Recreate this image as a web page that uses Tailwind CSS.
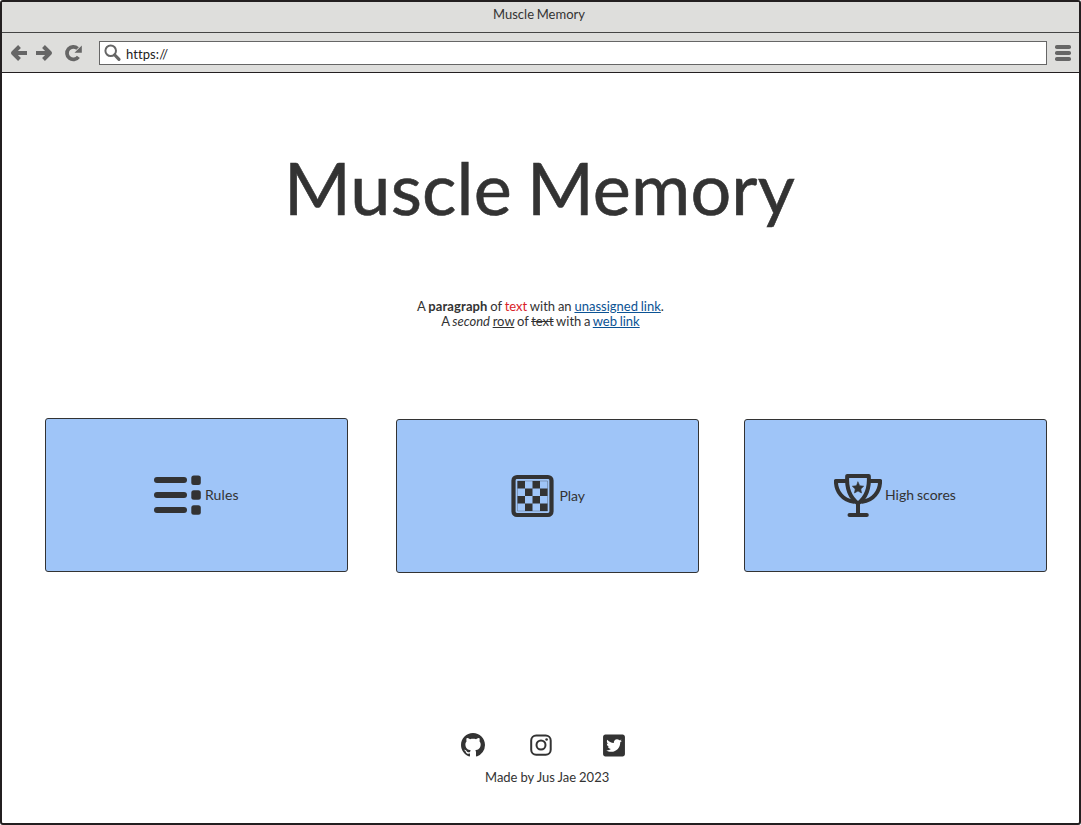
<!DOCTYPE html>
<html lang="en">
<head>
<meta charset="utf-8">
<title>Muscle Memory</title>
<script src="https://cdn.jsdelivr.net/npm/@tailwindcss/browser@4"></script>
</head>
<body class="bg-white">
<div class="flex h-[825px] w-[1081px] flex-col overflow-hidden rounded-[3px] border-2 border-[#231f20] bg-white font-[Lato,sans-serif] text-[13px] leading-[15px] text-[#333333]">
  <header class="h-[31px] shrink-0 border-b border-[#444444] bg-[#dededc] pt-[5px] text-center"><span class="mr-[3px] [word-spacing:-0.6px]">Muscle Memory</span></header>
  <nav class="flex h-10 shrink-0 items-center border-b border-[#231f20] bg-[#dededc] pl-2 text-[#666666]">
    <svg class="h-5 w-[76px]" viewBox="10 43 76 20" fill="none" stroke="currentColor" stroke-width="4" stroke-linejoin="round">
      <path d="M13 53H27M19.500 46.500L13 53L19.500 59.500"/>
      <path d="M36 53H50M43.500 46.500L50 53L43.500 59.500"/>
      <path d="M78.400 56.800A6.300 6.300 0 1 1 77.600 48.500" stroke-width="3.700"/>
      <path d="M81.800 45.500V52.800H74.500Z" fill="currentColor" stroke="none"/>
    </svg>
    <div class="ml-[13px] flex h-6 w-[948px] items-center border border-[#666666] bg-white pl-1">
      <svg class="h-5 w-[18px]" viewBox="104 43 18 20" fill="none" stroke="currentColor"><circle cx="110.700" cy="50.800" r="5.300" stroke-width="2"/><path d="M114.800 55L119 59.300" stroke-width="3.200" stroke-linecap="round"/></svg>
      <span class="ml-1 mt-[3px] tracking-[0.08px] text-[#222222]">https://</span>
    </div>
    <svg class="ml-2 h-4 w-4" viewBox="0 0 16 16" fill="currentColor"><rect width="16" height="4" rx="1.800"/><rect y="6" width="16" height="4" rx="1.800"/><rect y="12" width="16" height="4" rx="1.800"/></svg>
  </nav>
  <main class="flex grow flex-col">
    <h1 class="mt-[71px] h-[86px] pr-[2px] text-center text-[72px] leading-[86px] tracking-[0.16px] [word-spacing:-3.5px] [-webkit-text-stroke:0.6px_#333333]">Muscle Memory</h1>
    <p class="mt-[69px] text-center [word-spacing:-0.5px]">A <b class="tracking-[0.1px]">paragraph</b> of <span class="text-[#da2128]">text</span> with an <a class="text-[#0b5394] underline">unassigned link</a>.<br><span class="[word-spacing:-0.7px]">A <i>second</i> <u>row</u> of <s>text</s> with a <a class="text-[#0b5394] underline">web link</a></span></p>
    <section class="mt-[89px] flex h-[155px] items-start pl-[43px] text-[14px] leading-[17px]">
      <div class="flex h-[154px] w-[303px] items-center rounded-[3px] border border-[#333333] bg-[#9fc5f8] pl-[107px]">
        <svg class="h-12 w-12" viewBox="153 471 48 48" fill="currentColor"><rect x="154" y="477" width="33" height="6" rx="3"/><rect x="154" y="492" width="33" height="6" rx="3"/><rect x="154" y="507" width="33" height="6" rx="3"/><rect x="191.300" y="475.500" width="9.500" height="9.500" rx="2.500"/><rect x="191.300" y="490.300" width="9.500" height="9.500" rx="2.500"/><rect x="191.300" y="505.200" width="9.500" height="9.500" rx="2.500"/></svg>
        <span class="mb-[2px] ml-1 tracking-[0.1px]">Rules</span>
      </div>
      <div class="ml-12 mt-[1px] flex h-[154px] w-[303px] items-center rounded-[3px] border border-[#333333] bg-[#9fc5f8] pl-[112px]">
        <svg class="h-12 w-12" viewBox="509 472 48 48" fill="currentColor"><rect x="513.500" y="477" width="38" height="38" rx="3.500" fill="none" stroke="currentColor" stroke-width="4.200"/><path d="M517.500 481h7.500v7.500h-7.500zM532.500 481h7.500v7.500h-7.500zM525 488.500h7.500v7.500h-7.500zM540 488.500h7.500v7.500h-7.500zM517.500 496h7.500v7.500h-7.500zM532.500 496h7.500v7.500h-7.500zM525 503.500h7.500v7.500h-7.500zM540 503.500h7.500v7.500h-7.500z"/><path d="M517.500 481h30v30h-30z" fill="none" stroke="currentColor" stroke-width=".3"/></svg>
        <span class="mb-[2px] ml-[2.4px]">Play</span>
      </div>
      <div class="ml-[45px] mt-[1px] flex h-[153px] w-[303px] items-center rounded-[3px] border border-[#333333] bg-[#9fc5f8] pl-[89px]">
        <svg class="h-12 w-12" viewBox="834 472 48 48" fill="none" stroke="currentColor" stroke-width="4" stroke-linejoin="round" stroke-linecap="round"><path d="M847.200 475.900H868.800C869.600 487 866.200 497.500 858 503.500C849.800 497.500 846.400 487 847.200 475.900Z"/><path d="M847 481H835.900C836 491.500 842.500 500.300 853.800 501.700M869 481H880.100C880 491.500 873.500 500.300 862.200 501.700M858 503V515M849.500 515H866.800"/><path d="M858 482L859.700 485.700L863.700 486.200L860.800 489L861.500 493L858 491L854.500 493L855.200 489L852.300 486.200L856.300 485.700Z" fill="currentColor" stroke-width=".6"/></svg>
        <span class="mb-[2px] ml-[3px] [word-spacing:-0.6px]">High scores</span>
      </div>
    </section>
    <footer class="mt-[158px] flex flex-col">
      <div class="flex h-7 items-center pl-[459px]">
        <svg class="h-6 w-6" viewBox="0 0 16 16" fill="currentColor"><path d="M8 0C3.58 0 0 3.58 0 8c0 3.54 2.29 6.53 5.47 7.59.4.07.55-.17.55-.38 0-.19-.01-.82-.01-1.49-2.01.37-2.53-.49-2.69-.94-.09-.23-.48-.94-.82-1.13-.28-.15-.68-.52-.01-.53.63-.01 1.08.58 1.23.82.72 1.21 1.87.87 2.33.66.07-.52.28-.87.51-1.07-1.78-.2-3.64-.89-3.64-3.95 0-.87.31-1.59.82-2.15-.08-.2-.36-1.02.08-2.12 0 0 .67-.21 2.2.82.64-.18 1.32-.27 2-.27.68 0 1.36.09 2 .27 1.53-1.04 2.2-.82 2.2-.82.44 1.1.16 1.92.08 2.12.51.56.82 1.27.82 2.15 0 3.07-1.87 3.75-3.65 3.95.29.25.54.73.54 1.48 0 1.07-.01 1.93-.01 2.2 0 .21.15.46.55.38A8.013 8.013 0 0016 8c0-4.420-3.580-8-8-8z"/></svg>
        <svg class="ml-11 h-6 w-6" viewBox="529 733 24 24" fill="none" stroke="currentColor" stroke-width="2"><rect x="531.200" y="735.500" width="19.500" height="19.200" rx="5"/><circle cx="541" cy="745" r="4.500"/><circle cx="546.600" cy="739.500" r="1.300" fill="currentColor" stroke="none"/></svg>
        <svg class="ml-[50px] h-[25px] w-[22px]" viewBox="0 0 448 512" fill="currentColor"><path d="M400 32H48C21.500 32 0 53.500 0 80v352c0 26.500 21.500 48 48 48h352c26.500 0 48-21.500 48-48V80c0-26.500-21.500-48-48-48zm-48.900 158.800c.2 2.800.2 5.700.2 8.500 0 86.700-66 186.600-186.600 186.600-37.200 0-71.700-10.800-100.700-29.400 5.300.6 10.400.8 15.800.8 30.700 0 58.900-10.400 81.400-28-28.800-.6-53-19.500-61.300-45.500 10.100 1.500 19.200 1.500 29.600-1.200-30-6.100-52.500-32.500-52.500-64.400v-.8c8.700 4.900 18.900 7.900 29.600 8.300a65.447 65.447 0 0 1-29.200-54.600c0-12.200 3.200-23.400 8.900-33.100 32.300 39.800 80.800 65.800 135.200 68.600-9.300-44.500 24-80.600 64-80.600 18.900 0 35.900 7.900 47.900 20.700 14.800-2.800 29-8.300 41.600-15.800-4.900 15.200-15.200 28-28.800 36.100 13.200-1.400 26-5.100 37.800-10.200-8.900 13.100-20.100 24.700-32.900 34z"/></svg>
      </div>
      <p class="ml-[483px] mt-[11px] [word-spacing:-0.3px]">Made by Jus Jae 2023</p>
    </footer>
  </main>
</div>
</body>
</html>
